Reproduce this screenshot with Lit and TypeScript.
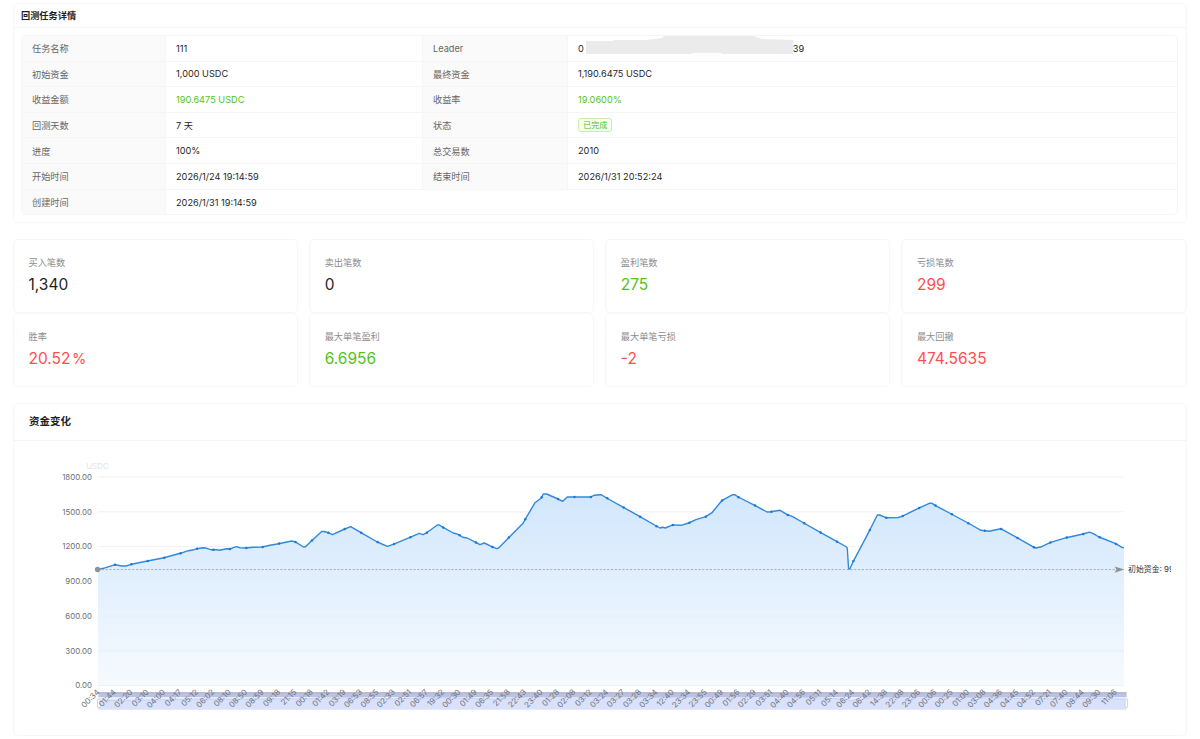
import { html, svg, css, LitElement } from 'lit';
import { customElement, property } from 'lit/decorators.js';
import { classMap } from 'lit/directives/class-map.js';

const STATS = [
  { title: '买入笔数', value: '1,340', tone: '' },
  { title: '卖出笔数', value: '0', tone: '' },
  { title: '盈利笔数', value: '275', tone: 'up' },
  { title: '亏损笔数', value: '299', tone: 'down' },
  { title: '胜率', value: '20.52', suffix: '%', tone: 'down' },
  { title: '最大单笔盈利', value: '6.6956', tone: 'up' },
  { title: '最大单笔亏损', value: '-2', tone: 'down' },
  { title: '最大回撤', value: '474.5635', tone: 'down' },
];

const TIMES = (
  '00:34 01:44 02:20 03:10 04:00 04:17 05:12 06:02 08:10 08:50 08:59 09:18 21:15 00:18 01:42 03:19 ' +
  '06:53 08:55 02:33 02:51 06:57 19:32 00:30 01:49 06:35 21:58 22:43 23:40 01:28 02:08 03:12 03:24 ' +
  '03:27 03:28 03:34 12:40 23:34 23:55 00:49 01:56 02:29 03:51 04:40 04:56 05:11 05:14 06:24 06:42 ' +
  '14:38 22:08 23:06 00:06 00:25 01:00 03:08 04:36 04:45 04:52 07:21 07:40 08:44 09:30 11:06'
).split(' ');

// balance curve, in canvas units
const POINTS: number[][] = [
  [98, 569.5], [103.3, 568.3], [115.3, 564.7], [121.7, 566], [126, 566], [131.5, 564.3], [147.5, 561],
  [164, 557.7], [180.4, 553.3], [188.3, 550.7], [194, 549.7], [196.7, 548.7], [203.3, 547.7],
  [206.7, 548.3], [210.7, 549.7], [217.5, 549.7], [219.3, 550.3], [221.7, 549.7], [226.7, 548.7],
  [230.3, 549], [233.3, 547.7], [236.7, 546.7], [240, 547.9], [245.7, 548], [253.3, 547.2],
  [262.3, 547], [270, 545.3], [278.7, 543.7], [291.7, 541], [295.3, 541.9], [303.5, 547],
  [305.5, 546.7], [311.7, 540.7], [321.7, 531.5], [324, 531.5], [328, 532.7], [332.5, 534.7],
  [344.7, 529], [350.7, 526.7], [361, 532.7], [377.3, 542], [387.3, 546.3], [393.3, 544.3],
  [410, 537.3], [419.3, 533.3], [423, 534.7], [426.3, 533], [437.3, 525], [439.3, 525],
  [443, 527.3], [453.3, 533], [459, 534.7], [462.7, 537.3], [467.3, 538], [475.7, 542.3],
  [480, 544.7], [484.3, 543], [491.7, 546.7], [496.7, 548.7], [498.7, 548], [508.7, 537.7],
  [523.3, 523], [525, 519.7], [535, 502.7], [541.3, 498], [543.3, 494], [546.7, 494],
  [558, 499], [562.7, 501.3], [567.3, 497], [590.7, 497], [594, 495.3], [601, 494.7],
  [606.7, 498], [623.3, 507.3], [640, 516.7], [656.3, 526], [660, 528], [662.7, 527.3],
  [665.3, 528], [672.7, 524.9], [681, 525.3], [688.7, 523], [696, 519.7], [705.7, 516.7],
  [712, 512.7], [721.7, 500.7], [732.7, 494.7], [734.7, 494.7], [738.3, 497], [754.7, 505.3],
  [767, 512], [771, 511.7], [780, 510.3], [787.3, 514.7], [792.7, 516.7], [803.7, 523],
  [820.3, 532.3], [837, 541.7], [846.7, 547], [847.3, 548.5], [848.6, 569], [849.8, 569],
  [853.3, 561.3], [869.7, 530.3], [877.3, 515], [879.5, 515], [886, 517.7], [898.3, 517.5],
  [902, 516.3], [918.3, 508.3], [929.3, 503.3], [932, 503.3], [935, 505.3], [951.3, 514],
  [968, 523], [981, 530.3], [989, 531.3], [1000.7, 528.7], [1017, 537.7], [1034, 547.3],
  [1035.7, 548], [1041.7, 546.7], [1050, 542.7], [1066.3, 537.7], [1083, 534], [1089.3, 532.2],
  [1093.3, 533.7], [1099, 537], [1115.7, 543.7], [1122, 547.3], [1124, 547.9],
];

const PLOT = { left: 98, right: 1124, top: 477, bottom: 685.5 };
const STEP = 16.41;

const yAt = (x: number) => {
  const i = Math.max(1, POINTS.findIndex((p) => p[0] >= x));
  const [x0, y0] = POINTS[i - 1];
  const [x1, y1] = POINTS[i];
  return y0 + ((y1 - y0) * (x - x0)) / (x1 - x0);
};

@customElement('balance-chart')
export class BalanceChart extends LitElement {
  static styles = css`
    :host {
      display: block;
    }
    svg {
      display: block;
    }
    text {
      font-family: Inter, 'Noto Sans CJK SC', sans-serif;
      font-size: 7.9px;
      fill: #6e7079;
    }
    .unit {
      fill: #e4e5e9;
    }
    .grid {
      stroke: #e6ebf2;
      stroke-opacity: 0.8;
      stroke-width: 0.8;
    }
    .line {
      fill: none;
      stroke: #3089df;
      stroke-width: 1.4;
      stroke-linejoin: round;
    }
    .dot {
      fill: #2079cc;
    }
    .mark {
      stroke: #a3a9b1;
      stroke-width: 0.9;
      stroke-dasharray: 2.2 1.6;
    }
    .mark-end {
      fill: #8f9296;
    }
    .mark-label {
      fill: #333;
    }
    .brush {
      fill: #d9e1fb;
    }
    .brush-area {
      fill: #e4effd;
    }
    .brush-line {
      fill: none;
      stroke: #b5c4e4;
      stroke-width: 0.6;
    }
    .move-bar {
      fill: #bcc2e4;
    }
    .axis {
      stroke: #aaaebb;
      stroke-width: 0.9;
    }
    .handle {
      fill: #fff;
      stroke: #b9c5ea;
      stroke-width: 0.8;
    }
  `;

  render() {
    const line = POINTS.map((p) => p.join(',')).join(' ');
    const mini = POINTS.map(([x, y]) => `${x},${(709 - (685.5 - y) * 0.072).toFixed(2)}`).join(' ');
    const ticks = [1800, 1500, 1200, 900, 600, 300, 0];
    return html`
      <svg width="1158" height="294" viewBox="13 441 1158 294">
        <defs>
          <linearGradient id="fill" x1="0" y1="0" x2="0" y2="1">
            <stop offset="0" stop-color="#1c86f2" stop-opacity="0.2"></stop>
            <stop offset="1" stop-color="#1c86f2" stop-opacity="0.04"></stop>
          </linearGradient>
        </defs>
        <text class="unit" x="97.5" y="469" text-anchor="middle">USDC</text>
        <polygon fill="url(#fill)" points="${PLOT.left},${PLOT.bottom} ${line} ${PLOT.right},${PLOT.bottom}"></polygon>
        ${ticks.map((v, i) => {
          const y = PLOT.top + (i * (PLOT.bottom - PLOT.top)) / 6;
          return svg`
            <line class="grid" x1=${PLOT.left} x2=${PLOT.right} y1=${y} y2=${y}></line>
            <text x="92" y=${y + 2.8} text-anchor="end">${v.toFixed(2)}</text>`;
        })}
        <polyline class="line" points=${line}></polyline>
        ${TIMES.slice(1).map((_, i) => {
          const x = PLOT.left + 0.6 + (i + 1) * STEP;
          return svg`<circle class="dot" cx=${x} cy=${yAt(x)} r="1.25"></circle>`;
        })}
        <line class="mark" x1="98" x2="1120" y1="569.6" y2="569.6"></line>
        <circle class="mark-end" cx="97.6" cy="569.5" r="2.7"></circle>
        <path class="mark-end" d="M1124.5 569.6l-10-3.2 2 3.2-2 3.2z"></path>
        <text class="mark-label" x="1128" y="572.4">初始资金: 999.00</text>

        <rect class="brush" x="98.5" y="692.5" width="1028" height="17.2"></rect>
        <polygon class="brush-area" points="98.5,709 98.5,697 1126,697 1126,703 ${mini.split(' ').reverse().join(' ')}"></polygon>
        <polyline class="brush-line" points=${mini}></polyline>
        <rect class="move-bar" x="98.5" y="692.5" width="1028" height="4.5"></rect>
        <line class="axis" x1="98.5" x2="1126.5" y1="692.8" y2="692.8"></line>
        <rect class="handle" x="97.5" y="699.2" width="2.6" height="8.4" rx="1"></rect>
        <rect class="handle" x="1125" y="699.2" width="2.6" height="8.4" rx="1"></rect>
        ${TIMES.map((t, i) => {
          const x = PLOT.left + i * STEP;
          return svg`<text transform="translate(${x} 690.5) rotate(-45)" text-anchor="end" dy="3">${t}</text>`;
        })}
      </svg>
    `;
  }
}

@customElement('stat-card')
export class StatCard extends LitElement {
  static styles = css`
    :host {
      display: block;
      box-sizing: border-box;
      border: 1px solid #f7f7f7;
      border-radius: 5px;
      padding: 15px;
    }
    .title {
      font-size: 9.2px;
      line-height: 15px;
      color: #8c8c8c;
    }
    .value {
      display: flex;
      gap: 1.5px;
      margin-top: 2px;
      font-size: 15.5px;
      line-height: 26px;
      color: #1f1f1f;
    }
    .suffix {
      font-size: 14.5px;
    }
    .up {
      color: #52c41a;
    }
    .down {
      color: #ff4d4f;
    }
  `;

  @property() heading = '';
  @property() value = '';
  @property() suffix = '';
  @property() tone = '';

  render() {
    return html`
      <div class="title">${this.heading}</div>
      <div class=${classMap({ value: true, up: this.tone === 'up', down: this.tone === 'down' })}>
        <span>${this.value}</span>${this.suffix ? html`<span class="suffix">${this.suffix}</span>` : ''}
      </div>
    `;
  }
}

@customElement('app-root')
export class AppRoot extends LitElement {
  static styles = css`
    :host {
      display: block;
      box-sizing: border-box;
      height: 739px;
      padding: 3px 13.5px 0 12.5px;
      overflow: hidden;
      background: #fff;
      color: #1f1f1f;
      font-family: Inter, 'Noto Sans CJK SC', sans-serif;
      font-size: 9.2px;
    }
    .card {
      box-sizing: border-box;
      border: 1px solid #f7f7f7;
      border-radius: 5px;
    }
    .detail {
      height: 220px;
    }
    .head {
      box-sizing: border-box;
      border-bottom: 1px solid #f5f5f5;
      font-weight: 600;
    }
    .detail .head {
      height: 24px;
      padding-left: 7.5px;
      line-height: 24px;
    }
    .table {
      display: grid;
      grid-template-columns: 144px 257px 145px 1fr;
      grid-auto-rows: 25.6px;
      box-sizing: border-box;
      height: 180px;
      margin: 7px 7.5px 0;
      border: 1px solid #f5f5f5;
      border-radius: 5px;
      overflow: hidden;
    }
    .cell {
      display: flex;
      align-items: center;
      box-sizing: border-box;
      padding-left: 10px;
      border-bottom: 1px solid #f5f5f5;
    }
    .label {
      border-right: 1px solid #f5f5f5;
      background: #fafafa;
      color: #666;
    }
    .split {
      border-right: 1px solid #f5f5f5;
    }
    .last {
      border-bottom: 0;
    }
    .wide {
      grid-column: span 3;
    }
    .up {
      color: #52c41a;
    }
    .tag {
      box-sizing: border-box;
      height: 14px;
      padding: 0 4.2px;
      border: 1px solid #c9efab;
      border-radius: 3px;
      background: #f6ffed;
      color: #52c41a;
      font-size: 8px;
      line-height: 12px;
    }
    .mask {
      display: block;
      margin: -6px 0 0 2px;
    }
    .stats {
      display: grid;
      grid-template-columns: repeat(4, 1fr);
      grid-auto-rows: 74.2px;
      column-gap: 10.6px;
      margin-top: 16px;
    }
    .chart {
      height: 333px;
      margin-top: 15.4px;
    }
    .chart .head {
      height: 37px;
      padding-left: 15.5px;
      font-size: 10.5px;
      line-height: 36px;
    }
    balance-chart {
      margin-left: -0.9px;
    }
  `;

  render() {
    return html`
      <section class="card detail">
        <div class="head">回测任务详情</div>
        <div class="table">
          <div class="cell label">任务名称</div>
          <div class="cell split">111</div>
          <div class="cell label">Leader</div>
          <div class="cell">
            <span>0</span>
            <svg class="mask" width="207" height="18" viewBox="0 0 207 18">
              <path fill="#ebebeb" d="M0 5h27l1-1h32l16-2 2-2h90l8 3 31 1v14h-71l-1-1h-28l-1 1H0z"></path>
            </svg>
            <span>39</span>
          </div>

          <div class="cell label">初始资金</div>
          <div class="cell split">1,000 USDC</div>
          <div class="cell label">最终资金</div>
          <div class="cell">1,190.6475 USDC</div>

          <div class="cell label">收益金额</div>
          <div class="cell split up">190.6475 USDC</div>
          <div class="cell label">收益率</div>
          <div class="cell up">19.0600%</div>

          <div class="cell label">回测天数</div>
          <div class="cell split">7 天</div>
          <div class="cell label">状态</div>
          <div class="cell"><span class="tag">已完成</span></div>

          <div class="cell label">进度</div>
          <div class="cell split">100%</div>
          <div class="cell label">总交易数</div>
          <div class="cell">2010</div>

          <div class="cell label">开始时间</div>
          <div class="cell split">2026/1/24 19:14:59</div>
          <div class="cell label">结束时间</div>
          <div class="cell">2026/1/31 20:52:24</div>

          <div class="cell label last">创建时间</div>
          <div class="cell wide last">2026/1/31 19:14:59</div>
        </div>
      </section>

      <section class="stats">
        ${STATS.map(
          (s) => html`<stat-card .heading=${s.title} .value=${s.value} .suffix=${s.suffix ?? ''} .tone=${s.tone}></stat-card>`
        )}
      </section>

      <section class="card chart">
        <div class="head">资金变化</div>
        <balance-chart></balance-chart>
      </section>
    `;
  }
}
